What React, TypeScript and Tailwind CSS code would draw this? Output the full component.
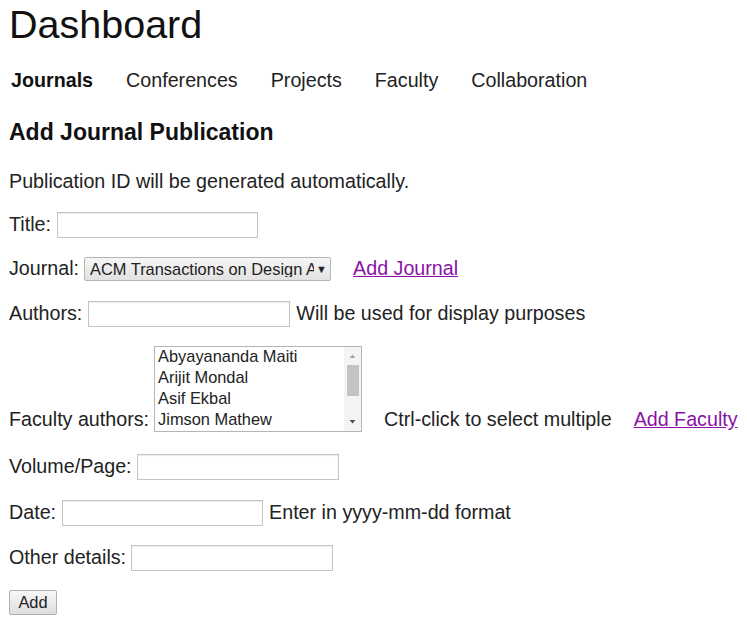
import React from "react";

function TextInput({ w }: { w: string }) {
  return (
    <div className={`h-[26px] ${w} border border-[#c4c4c4] bg-white shadow-[inset_0_1px_1px_rgba(0,0,0,0.08)]`} />
  );
}

export default function App() {
  const navItems = ["Conferences", "Projects", "Faculty", "Collaboration"];
  const faculty = ["Abyayananda Maiti", "Arijit Mondal", "Asif Ekbal", "Jimson Mathew"];
  return (
    <div className="min-h-[629px] bg-white pl-[9px] text-[#222] font-['Liberation_Sans',Arial,sans-serif] text-[19.7px] leading-none">
      <h1 className="pt-[5px] text-[39.5px] leading-none h-[44px] font-normal text-[#111]">Dashboard</h1>
      <nav className="mt-[27px] h-[20px] flex items-center pl-[2px]">
        <span className="font-bold text-[#111]">Journals</span>
        {navItems.map((n) => (
          <span key={n} className="ml-[33px] text-[#222]">
            {n}
          </span>
        ))}
      </nav>
      <h3 className="mt-[30px] h-[23px] text-[23px] font-bold leading-none text-[#111]">Add Journal Publication</h3>
      <div className="mt-[28px] h-[20px] flex items-center">Publication ID will be generated automatically.</div>

      <div className="mt-[20px] h-[26px] flex items-center">
        <span>Title:</span>
        <div className="ml-[6px]">
          <TextInput w="w-[201px]" />
        </div>
      </div>

      <div className="mt-[19px] h-[24px] flex items-center">
        <span>Journal:</span>
        <div className="ml-[5px] h-[24px] w-[247px] border border-[#b5b5b5] rounded-[2px] bg-gradient-to-b from-[#f6f6f6] to-[#e2e2e2] flex items-center pl-[5px] pr-[4px] text-[16.4px] text-[#222]">
          <span className="whitespace-nowrap overflow-hidden w-[224px] shrink-0">ACM Transactions on Design A</span>
          <span className="text-[11px] ml-[2px]">▼</span>
        </div>
        <a href="#" className="ml-[22px] text-[#8a12a6] underline">Add Journal</a>
      </div>

      <div className="mt-[20px] h-[26px] flex items-center">
        <span>Authors:</span>
        <div className="ml-[6px]">
          <TextInput w="w-[202px]" />
        </div>
        <span className="ml-[6px]">Will be used for display purposes</span>
      </div>

      <div className="mt-[19px] h-[86px] flex items-end">
        <span className="mb-[2px]">Faculty authors:</span>
        <div className="ml-[5px] h-[86px] w-[208px] border border-[#b5b5b5] bg-white flex overflow-hidden">
          <div className="flex-1 pl-[3px] -mt-[1px] text-[16.4px] leading-[21px] text-[#222]">
            {faculty.map((f) => (
              <div key={f} className="h-[21px] whitespace-nowrap">
                {f}
              </div>
            ))}
          </div>
          <div className="w-[17px] bg-[#f4f4f4] flex flex-col items-center">
            <svg width="9" height="14" viewBox="0 0 9 14" className="mt-[2px]">
              <path d="M1.5 9 L4.5 5.5 L7.5 9 Z" fill="#a5a5a5" />
            </svg>
            <div className="w-[12px] h-[31px] bg-[#c3c3c3] mt-[2px]" />
            <div className="flex-1" />
            <svg width="9" height="14" viewBox="0 0 9 14" className="mb-[2px]">
              <path d="M1.5 5 L4.5 8.5 L7.5 5 Z" fill="#505050" />
            </svg>
          </div>
        </div>
        <span className="ml-[22px] mb-[2px]">Ctrl-click to select multiple</span>
        <a href="#" className="ml-[22px] mb-[2px] text-[#8a12a6] underline">Add Faculty</a>
      </div>

      <div className="mt-[22px] h-[26px] flex items-center">
        <span>Volume/Page:</span>
        <div className="ml-[5px]">
          <TextInput w="w-[202px]" />
        </div>
      </div>

      <div className="mt-[20px] h-[26px] flex items-center">
        <span>Date:</span>
        <div className="ml-[6px]">
          <TextInput w="w-[201px]" />
        </div>
        <span className="ml-[6px]">Enter in yyyy-mm-dd format</span>
      </div>

      <div className="mt-[19px] h-[26px] flex items-center">
        <span>Other details:</span>
        <div className="ml-[5px]">
          <TextInput w="w-[202px]" />
        </div>
      </div>

      <div className="mt-[19px] h-[25px] flex items-center">
        <button className="h-[25px] w-[48px] border border-[#b0b0b0] rounded-[2px] bg-gradient-to-b from-[#f8f8f8] to-[#dedede] text-[16.4px] text-[#222]">
          Add
        </button>
      </div>
    </div>
  );
}
